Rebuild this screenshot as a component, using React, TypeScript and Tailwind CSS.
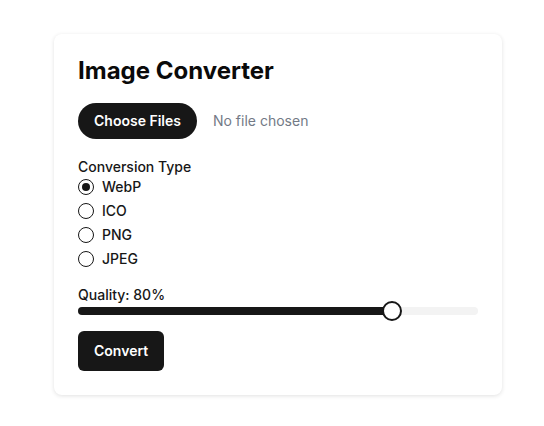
import React from "react";

const options = ["WebP", "ICO", "PNG", "JPEG"];

export default function App() {
  const [sel, setSel] = React.useState("WebP");
  const quality = 80;
  const trackW = 400;
  const thumb = 20;
  const thumbLeft = (thumb / 2) + (quality / 100) * (trackW - thumb);
  return (
    <div className="min-h-screen bg-white pt-[34px] pl-[54px]" style={{ fontFamily: "Inter, 'Noto Sans', sans-serif" }}>
      <div className="w-[448px] rounded-lg bg-white px-6 pt-[21px] pb-6 shadow-[0_1px_4px_rgba(0,0,0,0.12)]">
        <h1 className="mb-4 text-2xl font-bold leading-8 text-[#0a0a0a]">Image Converter</h1>
        <div className="flex items-center gap-4">
          <button className="h-9 rounded-full bg-[#171717] px-4 text-sm font-semibold text-white">Choose Files</button>
          <span className="text-sm text-[#737a86]">No file chosen</span>
        </div>
        <div className="mt-[18px]">
          <div className="text-sm font-medium leading-5 text-[#171717]">Conversion Type</div>
          <div className="flex flex-col gap-1">
            {options.map((o) => (
              <label key={o} className="flex h-5 items-center gap-2 text-sm font-medium text-[#171717]" onClick={() => setSel(o)}>
                <span className="flex h-4 w-4 items-center justify-center rounded-full border-[1.5px] border-[#171717]">
                  {sel === o && <span className="h-2 w-2 rounded-full bg-[#171717]" />}
                </span>
                {o}
              </label>
            ))}
          </div>
        </div>
        <div className="mt-4">
          <div className="text-sm font-medium leading-5 text-[#171717]">Quality: {quality}%</div>
          <div className="relative h-3 w-[400px]">
            <div className="absolute left-0 top-[2px] h-2 w-full rounded-full bg-[#f3f3f3]" />
            <div className="absolute left-0 top-[2px] h-2 rounded-full bg-[#171717]" style={{ width: thumbLeft }} />
            <div
              className="absolute top-[-4px] h-5 w-5 rounded-full border-2 border-[#171717] bg-white"
              style={{ left: thumbLeft - thumb / 2 }}
            />
          </div>
        </div>
        <button className="mt-[14px] h-10 rounded-md bg-[#171717] px-4 text-sm font-semibold text-white">Convert</button>
      </div>
    </div>
  );
}
